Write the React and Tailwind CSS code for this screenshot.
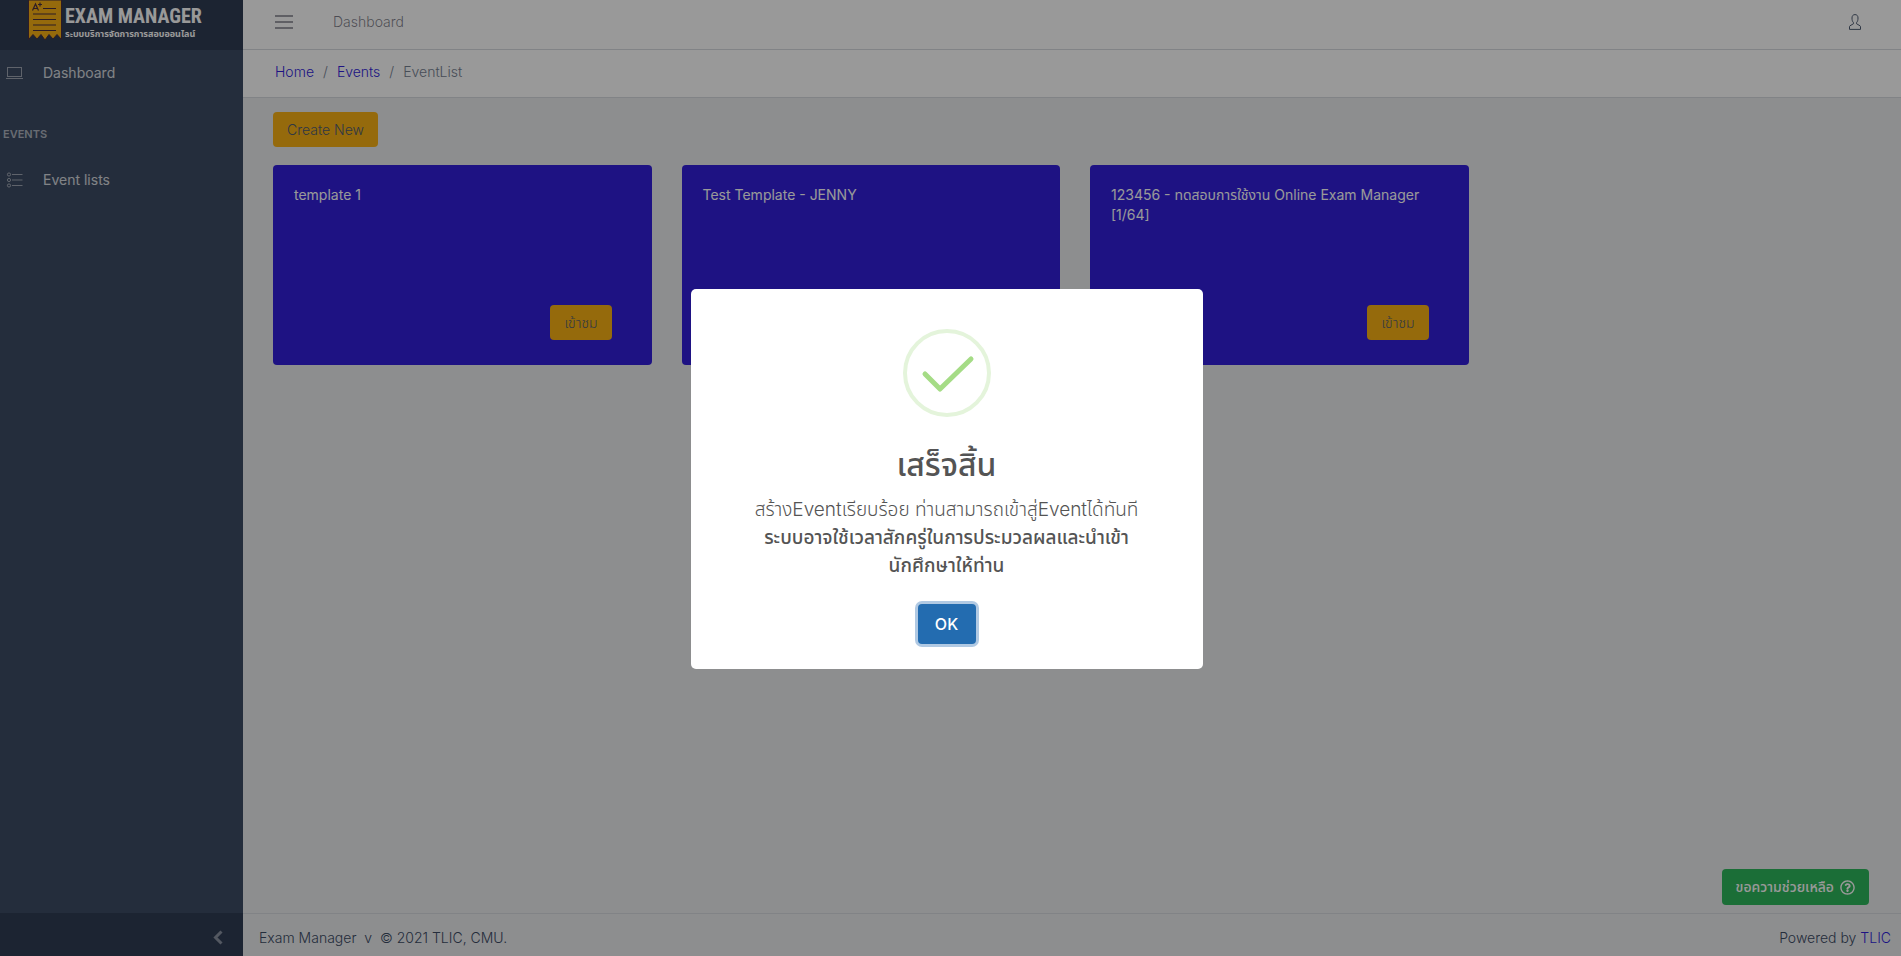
import React, { useState } from 'react';
import { FaRegQuestionCircle } from 'react-icons/fa';

const events = [
    { id: 1, name: 'template 1' },
    { id: 2, name: 'Test Template - JENNY' },
    { id: 3, name: '123456 - ทดสอบการใช้งาน Online Exam Manager [1/64]' }
];

const LaptopIcon = () => (
    <svg viewBox="0 0 17 13" className="h-[13px] w-[17px]" fill="none" stroke="currentColor">
        <rect x="1.5" y="0.5" width="14" height="9" />
        <path d="M0 11.5h17" />
    </svg>
);

const ListIcon = () => (
    <svg viewBox="0 0 17 16" className="h-4 w-[17px]" fill="none" stroke="currentColor">
        <circle cx="3" cy="2.5" r="1.6" />
        <circle cx="3" cy="8" r="1.6" />
        <circle cx="3" cy="13.5" r="1.6" />
        <path d="M6 2.5h10.5M6 8h10.5M6 13.5h10.5" />
    </svg>
);

const MenuIcon = () => (
    <svg viewBox="0 0 18 14" className="h-[14px] w-[18px]" fill="none" stroke="currentColor" strokeWidth="1.4">
        <path d="M0 1h18M0 7h18M0 13h18" />
    </svg>
);

const UserIcon = () => (
    <svg viewBox="0 0 12 16" className="h-4 w-3" fill="none" stroke="currentColor">
        <path d="M6 .6C4 .6 3 1.9 3 4c0 2 .3 3.4 1.5 4.7v1L1 11.8c-.4.2-.5.5-.5.9v2.7h11v-2.7c0-.4-.1-.7-.5-.9L7.5 9.7v-1C8.7 7.4 9 6 9 4 9 1.9 8 .6 6 .6z" />
    </svg>
);

const ChevronIcon = () => (
    <svg viewBox="0 0 10 15" className="h-[15px] w-[10px]" fill="none" stroke="currentColor" strokeWidth="3">
        <path d="M8.5 1.5l-6 6 6 6" />
    </svg>
);

const ReceiptLogo = () => (
    <svg viewBox="0 0 34 41" className="h-[41px] w-[34px]" fill="none">
        <path d="M.5 0h33v39.5l-4.500-5-4 4.500-4-4.500-4 5.500-4-5.500-4 4.500-4-4.500-4.500 5z" fill="#f9b115" stroke="#4a3040" />
        <path d="M4.500 10.500l3-6.500 3 6.500M5.500 8.500h4M12 2.500v4M10 4.500h4M15 8.500h13M5 14h23M5 19.500h23M5 25h23M5 30.500h23" stroke="#4a3040" strokeWidth="1.2" />
    </svg>
);

const Sidebar = () => (
    <aside className="flex w-[243px] shrink-0 flex-col bg-[#3c4b64] text-white/80">
        <div className="flex h-[50px] items-start gap-[3px] bg-[#303c54] pl-7 text-white">
            <ReceiptLogo />
            <div className="flex flex-col pt-1 whitespace-nowrap">
                <span className="font-['Roboto_Condensed',Roboto,sans-serif] text-xl leading-6 font-bold">EXAM MANAGER</span>
                <span className="text-[9px] leading-3 font-bold">ระบบบริการจัดการการสอบออนไลน์</span>
            </div>
        </div>
        <nav className="flex-1">
            <a href="#dashboard" className="flex h-[46px] items-center gap-5 pl-[6px]">
                <span className="text-white/50"><LaptopIcon /></span>
                Dashboard
            </a>
            <h2 className="mt-4 flex h-[45px] items-center pl-[3px] text-[11px] font-semibold text-white/60">EVENTS</h2>
            <a href="#events" className="flex h-[46px] items-center gap-5 pl-[6px]">
                <span className="text-white/50"><ListIcon /></span>
                Event lists
            </a>
        </nav>
        <button type="button" aria-label="Minimize sidebar" className="flex h-[43px] items-center justify-end bg-[#303c54] pt-[6px] pr-5 text-[#8a93a2]">
            <ChevronIcon />
        </button>
    </aside>
);

const EventCard = ({ name }) => (
    <article className="flex h-[200px] flex-col justify-between rounded bg-[#321fdb] pt-5 pr-5 pb-[25px] pl-[21px] leading-5 text-white">
        <h3>{name}</h3>
        <button type="button" className="mr-5 h-[35px] self-end rounded bg-[#f9b115] px-[14px] font-light text-[#4f5d73]">เข้าชม</button>
    </article>
);

const SuccessDialog = ({ onClose }) => (
    <div className="fixed inset-0 z-20 flex items-center justify-center bg-black/40 pr-2">
        <div role="dialog" aria-modal="true" aria-labelledby="dialog-title" className="mt-[2px] flex h-[380px] w-[512px] flex-col items-center rounded-[5px] bg-white pt-10 text-[#545454]">
            <svg viewBox="0 0 88 88" className="h-[88px] w-[88px] shrink-0" fill="none">
                <circle cx="44" cy="44" r="42" stroke="#e4f4db" strokeWidth="4" />
                <path d="M22 45l15 15 31-30" stroke="#a5dc86" strokeWidth="5" strokeLinecap="round" strokeLinejoin="round" />
            </svg>
            <h2 id="dialog-title" className="mt-6 text-[32px] leading-[48px] font-medium">เสร็จสิ้น</h2>
            <p className="mt-[7px] text-center text-[19px] leading-7 font-light whitespace-nowrap">
                สร้างEventเรียบร้อย ท่านสามารถเข้าสู่Eventได้ทันที
                <br />
                <b className="font-medium">
                    ระบบอาจใช้เวลาสักครู่ในการประมวลผลและนำเข้า
                    <br />
                    นักศึกษาให้ท่าน
                </b>
            </p>
            <button
                type="button"
                onClick={onClose}
                className="mt-6 h-10 w-[58px] shrink-0 rounded bg-[#236cb0] text-base font-medium text-white ring-3 ring-[#b0c9e3]"
            >
                OK
            </button>
        </div>
    </div>
);

const App = () => {
    const [showDialog, setShowDialog] = useState(true);

    return (
        <div className="flex min-h-screen bg-[#ebedef] font-[Inter,'Noto_Sans_Thai',sans-serif] text-sm text-[#3c4b64]">
            <Sidebar />
            <div className="flex min-w-0 flex-1 flex-col">
                <header className="flex h-[50px] items-center border-b border-[#d8dbe0] bg-white pr-10 pb-[6px] pl-8 font-light text-[#00001580]">
                    <button type="button" aria-label="Toggle sidebar"><MenuIcon /></button>
                    <a href="#dashboard" className="ml-10">Dashboard</a>
                    <button type="button" aria-label="Account" className="ml-auto text-[#4f5d73]"><UserIcon /></button>
                </header>
                <nav aria-label="Breadcrumb" className="flex h-12 items-center gap-[9px] border-b border-[#d8dbe0] bg-white pb-1 pl-8 font-light text-[#768192]">
                    <a href="#home" className="text-[#321fdb]">Home</a>
                    <span>/</span>
                    <a href="#events" className="text-[#321fdb]">Events</a>
                    <span>/</span>
                    <span>EventList</span>
                </nav>
                <main className="flex-1 pt-[14px] pr-6 pl-[30px]">
                    <button type="button" className="h-[35px] rounded bg-[#f9b115] px-[14px] font-light text-[#4f5d73]">Create New</button>
                    <div className="mt-[18px] grid grid-cols-4 gap-[30px]">
                        {events.map((event) => (
                            <EventCard key={event.id} name={event.name} />
                        ))}
                    </div>
                </main>
                <footer className="flex h-[43px] items-center justify-between border-t border-[#d8dbe0] pt-[6px] pr-[10px] pl-4 font-light">
                    <span>Exam Manager &nbsp;v &nbsp;© 2021 TLIC, CMU.</span>
                    <span>Powered by <a href="#tlic" className="text-[#321fdb]">TLIC</a></span>
                </footer>
            </div>
            <button type="button" className="fixed right-8 bottom-[51px] z-10 flex h-9 items-center gap-[6px] rounded bg-[#2eb85c] px-[14px] font-medium text-white">
                ขอความช่วยเหลือ
                <FaRegQuestionCircle className="h-[15px] w-[15px]" />
            </button>
            {showDialog && <SuccessDialog onClose={() => setShowDialog(false)} />}
        </div>
    );
};

export default App;
